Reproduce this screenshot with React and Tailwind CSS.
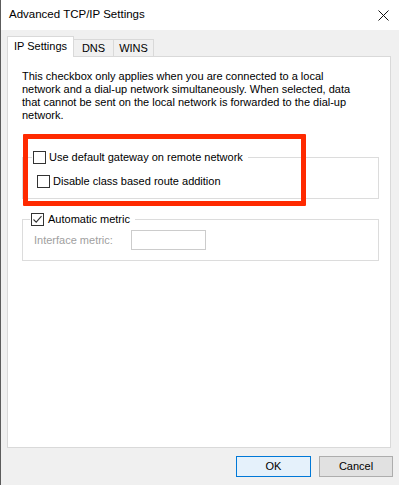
import React from "react";

function Checkbox({ checked }) {
  return (
    <span className="w-[13px] h-[13px] border border-[#333333] bg-white flex items-center justify-center shrink-0">
      {checked && (
        <svg width="11" height="11" viewBox="0 0 11 11">
          <path d="M1.5 5.5 L4.2 8.2 L9.5 2.2" fill="none" stroke="#333333" strokeWidth="1.1" />
        </svg>
      )}
    </span>
  );
}

export default function App() {
  return (
    <div
      className="w-[399px] h-[485px] bg-[#f0f0f0] border-l border-[#5c5c5c] flex flex-col text-[11px] text-black"
      style={{ fontFamily: "'Liberation Sans', Arial, sans-serif" }}
    >
      {/* title bar */}
      <div className="h-[30px] bg-white flex items-center justify-between pl-[8px] pr-[9px]">
        <span className="text-[11.5px]">Advanced TCP/IP Settings</span>
        <svg width="11" height="11" viewBox="0 0 11 11" className="mr-[1px]">
          <path d="M0.5 0.5 L10.5 10.5 M10.5 0.5 L0.5 10.5" stroke="#111111" strokeWidth="1" />
        </svg>
      </div>

      <div className="flex flex-col pl-[6px] pt-[6px]">
        {/* tabs */}
        <div className="flex items-end">
          <div className="relative z-10 -mb-px w-[67px] h-[21px] bg-white border border-b-0 border-[#d9d9d9] flex items-center justify-center pb-[1px]">
            IP Settings
          </div>
          <div className="-ml-px w-[41px] h-[17px] bg-[#f0f0f0] border border-b-0 border-[#d9d9d9] flex items-center justify-center">
            DNS
          </div>
          <div className="-ml-px w-[41px] h-[17px] bg-[#f0f0f0] border border-b-0 border-[#d9d9d9] flex items-center justify-center">
            WINS
          </div>
        </div>

        {/* panel */}
        <div className="relative w-[384px] h-[392px] bg-white border border-[#d9d9d9] pt-[13px]">
          <p className="pl-[14px] leading-[13px]">
            This checkbox only applies when you are connected to a local
            <br />
            network and a dial-up network simultaneously. When selected, data
            <br />
            that cannot be sent on the local network is forwarded to the dial-up
            <br />
            network.
          </p>

          <fieldset className="mt-[28px] ml-[14px] w-[357px] border border-[#dcdcdc]">
            <legend className="ml-[9px] pl-[1px] pr-[5px] flex items-center gap-[3px] leading-[14px]">
              <Checkbox />
              <span>Use default gateway on remote network</span>
            </legend>
            <label className="flex items-center gap-[3px] leading-[14px] pt-[10px] pb-[10px] pl-[14px]">
              <Checkbox />
              <span>Disable class based route addition</span>
            </label>
          </fieldset>

          <fieldset className="mt-[13px] ml-[14px] w-[357px] border border-[#dcdcdc]">
            <legend className="ml-[7px] pl-[1px] pr-[5px] flex items-center gap-[4px] leading-[14px]">
              <Checkbox checked />
              <span>Automatic metric</span>
            </legend>
            <div className="flex items-center pt-[4px] pb-[10px] pl-[11px]">
              <span className="w-[97px] text-[#a0a0a0]">Interface metric:</span>
              <span className="w-[75px] h-[20px] border border-[#cccccc] bg-white"></span>
            </div>
          </fieldset>

          {/* annotation */}
          <div className="absolute left-[15px] top-[77px] w-[283px] h-[72px] border-[5px] border-[#ff2a00] rounded-[1px]"></div>
        </div>

        {/* buttons */}
        <div className="flex justify-end gap-[8px] pr-[6px] mt-[8px]">
          <button className="w-[75px] h-[21px] border border-[#0078d7] bg-[#e5f1fb] flex items-center justify-center">
            OK
          </button>
          <button className="w-[74px] h-[21px] border border-[#adadad] bg-[#e1e1e1] flex items-center justify-center">
            Cancel
          </button>
        </div>
      </div>
    </div>
  );
}
